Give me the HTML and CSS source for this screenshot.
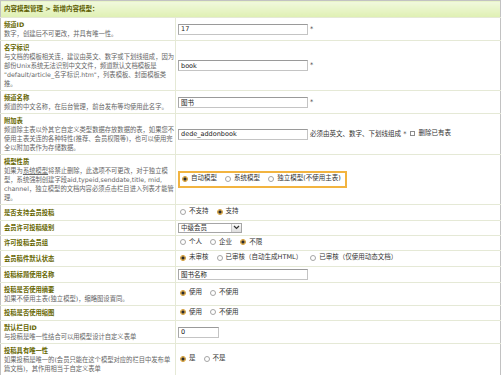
FILE: index.html
```html
<!DOCTYPE html>
<html lang="zh-CN">
<head>
    <meta charset="UTF-8">
    <meta name="viewport" content="width=device-width, initial-scale=1.0">
    <title>新增内容模型</title>
    <link rel="stylesheet" href="styles.css">
</head>
<body>
    <table class="form-table">
        <colgroup>
            <col class="col-info">
            <col>
        </colgroup>
        <tr>
            <td colspan="2" class="title">内容模型管理 &gt; 新增内容模型：</td>
        </tr>
        <tr>
            <td class="info"><b>频道ID</b>数字，创建后不可更改，并具有唯一性。</td>
            <td class="field"><input type="text" class="txt" value="17"> <span class="req">*</span></td>
        </tr>
        <tr>
            <td class="info"><b>名字标识</b>与文档的模板相关连，建议由英文、数字或下划线组成，因为部份Unix系统无法识别中文文件，频道默认文档模板是 "default/article_名字标识.htm"，列表模板、封面模板类推。</td>
            <td class="field"><input type="text" class="txt" value="book"> <span class="req">*</span></td>
        </tr>
        <tr>
            <td class="info"><b>频道名称</b>频道的中文名称，在后台管理，前台发布等均使用此名字。</td>
            <td class="field"><input type="text" class="txt" value="图书"> <span class="req">*</span></td>
        </tr>
        <tr>
            <td class="info"><b>附加表</b>频道除主表以外其它自定义类型数据存放数据的表，如果您不使用主表关连的各种特性(推荐、会员权限等)，也可以使用完全以附加表作为存储数据。</td>
            <td class="field">
                <input type="text" class="txt" value="dede_addonbook">
                必须由英文、数字、下划线组成 <span class="req">*</span>
                <label class="opt"><input type="checkbox" class="chk">删除已有表</label>
            </td>
        </tr>
        <tr>
            <td class="info"><b>模型性质</b>如果为<u>系统模型</u>将禁止删除，此选项不可更改，对于独立模型，系统强制创建字段aid,typeid,senddate,title, mid, channel，独立模型的文档内容必须点击栏目进入列表才能管理。</td>
            <td class="field">
                <span class="model-box">
                    <label class="opt"><input type="radio" name="issystem" checked>自动模型</label>
                    <label class="opt"><input type="radio" name="issystem">系统模型</label>
                    <label class="opt"><input type="radio" name="issystem">独立模型(不使用主表)</label>
                </span>
            </td>
        </tr>
        <tr>
            <td class="info"><b>是否支持会员投稿</b></td>
            <td class="field">
                <label class="opt"><input type="radio" name="issend">不支持</label>
                <label class="opt"><input type="radio" name="issend" checked>支持</label>
            </td>
        </tr>
        <tr>
            <td class="info"><b>会员许可投稿级别</b></td>
            <td class="field">
                <span class="select">
                    <select><option>中级会员</option></select>
                    <span class="select-btn"><svg width="7" height="5" viewBox="0 0 7 5"><path d="M1 1l2.5 2.5L6 1" fill="none" stroke="#333" stroke-width="1.2"/></svg></span>
                </span>
            </td>
        </tr>
        <tr>
            <td class="info"><b>许可投稿会员组</b></td>
            <td class="field">
                <label class="opt"><input type="radio" name="usertype">个人</label>
                <label class="opt"><input type="radio" name="usertype">企业</label>
                <label class="opt"><input type="radio" name="usertype" checked>不限</label>
            </td>
        </tr>
        <tr>
            <td class="info"><b>会员稿件默认状态</b></td>
            <td class="field">
                <label class="opt"><input type="radio" name="arcrank" checked>未审核</label>
                <label class="opt"><input type="radio" name="arcrank">已审核（自动生成HTML）</label>
                <label class="opt"><input type="radio" name="arcrank">已审核（仅使用动态文档）</label>
            </td>
        </tr>
        <tr>
            <td class="info"><b>投稿标题使用名称</b></td>
            <td class="field"><input type="text" class="txt" value="图书名称"></td>
        </tr>
        <tr>
            <td class="info"><b>投稿是否使用摘要</b>如果不使用主表(独立模型)，缩略图设置同。</td>
            <td class="field">
                <label class="opt"><input type="radio" name="sendinfo" checked>使用</label>
                <label class="opt"><input type="radio" name="sendinfo">不使用</label>
            </td>
        </tr>
        <tr>
            <td class="info"><b>投稿是否使用缩图</b></td>
            <td class="field">
                <label class="opt"><input type="radio" name="sendpic" checked>使用</label>
                <label class="opt"><input type="radio" name="sendpic">不使用</label>
            </td>
        </tr>
        <tr>
            <td class="info"><b>默认栏目ID</b>与投稿是唯一性结合可以用模型设计自定义表单</td>
            <td class="field"><input type="text" class="txt short" value="0"></td>
        </tr>
        <tr class="last">
            <td class="info"><b>投稿具有唯一性</b>如果投稿是唯一的(会员只能在这个模型对应的栏目中发布单篇文档)，其作用相当于自定义表单</td>
            <td class="field">
                <label class="opt"><input type="radio" name="isonly" checked>是</label>
                <label class="opt"><input type="radio" name="isonly">不是</label>
            </td>
        </tr>
    </table>
</body>
</html>
```

FILE: styles.css
```css
body {
    margin: 0;
    font-family: "DejaVu Sans", "Noto Sans CJK SC", sans-serif;
    font-size: 6.5px;
    line-height: 9px;
    color: #333;
    background: #fff;
}

.form-table {
    width: 501px;
    table-layout: fixed;
    border-collapse: collapse;
    border: 1px solid #c2c2c2;
}

.col-info {
    width: 175px;
}

.form-table td {
    padding: 2px 2px;
    border-bottom: 1px solid #e5e9d6;
    vertical-align: middle;
}

.title {
    height: 12px;
    padding-left: 3px !important;
    background: linear-gradient(#f1f9de, #dff0b2);
    font-weight: bold;
    color: #5c5c00;
}

.form-table .info {
    padding-left: 3px;
    padding-right: 1px;
    border-right: 1px solid #e5e9d6;
    font-size: 6.3px;
    color: #666;
}

.info b {
    display: block;
    color: #666600;
}

.form-table .last td {
    padding-bottom: 5px;
}

.field {
    color: #333;
}

.txt {
    width: 130px;
    height: 11px;
    box-sizing: border-box;
    margin: 0;
    padding: 0 2px;
    border: 1px solid #c4c4c4;
    border-top-color: #9a9a9a;
    border-left-color: #a8a8a8;
    font: inherit;
    color: #222;
    vertical-align: middle;
}

.txt.short {
    width: 41px;
}

.req {
    color: #333;
}

.opt {
    display: inline-flex;
    align-items: center;
    margin-right: 4px;
}

.opt input[type="radio"] {
    -webkit-appearance: none;
    appearance: none;
    box-sizing: border-box;
    width: 6px;
    height: 6px;
    margin: 0 3px 0 2px;
    border: 1px solid #a5a5a5;
    border-radius: 50%;
    background: #fff;
}

.opt input[type="radio"]:checked {
    border-color: #d7a13c;
    background: radial-gradient(circle, #2b2b2b 0 1.4px, #f4c870 1.8px);
}

.chk {
    -webkit-appearance: none;
    appearance: none;
    box-sizing: border-box;
    width: 5px;
    height: 5px;
    margin: 0 3px 0 2px;
    border: 1px solid #8c8c8c;
    background: #fff;
}

.model-box {
    display: inline-block;
    padding: 1px 0 1px 0;
    border: 2px solid #f2b440;
}

.select {
    display: inline-flex;
    height: 10px;
    border: 1px solid #a6a6a6;
    box-sizing: border-box;
    vertical-align: middle;
}

.select select {
    -webkit-appearance: none;
    appearance: none;
    width: 52px;
    margin: 0;
    padding: 0 2px;
    border: none;
    background: #fff;
    font: inherit;
    line-height: 8px;
    color: #333;
}

.select-btn {
    display: flex;
    align-items: center;
    justify-content: center;
    width: 9px;
    background: linear-gradient(#fafafa, #dedede);
    border-left: 1px solid #c8c8c8;
}
```
